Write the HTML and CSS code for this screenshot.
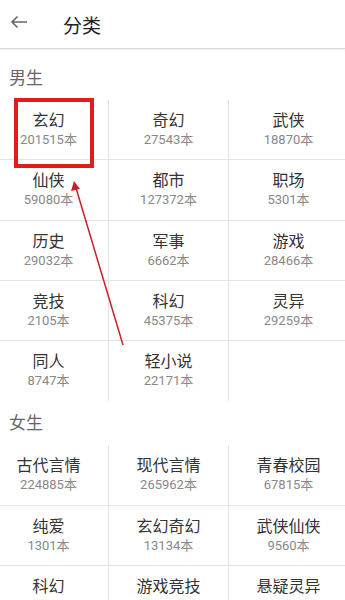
FILE: index.html
```html
<!DOCTYPE html>
<html lang="zh">
<head>
    <meta charset="UTF-8">
    <meta name="viewport" content="width=device-width, initial-scale=1.0">
    <title>分类</title>
    <link rel="stylesheet" href="styles.css">
</head>
<body>
    <div class="toolbar">
        <svg class="back" width="18" height="14" viewBox="0 0 18 14">
            <path d="M17 7H2M7.5 1.5L2 7l5.5 5.5" fill="none" stroke="#666" stroke-width="1.6"/>
        </svg>
        <span class="title">分类</span>
    </div>

    <div class="section first">男生</div>
    <div class="grid">
        <div class="cell"><div class="name">玄幻</div><div class="count">201515本</div></div>
        <div class="cell"><div class="name">奇幻</div><div class="count">27543本</div></div>
        <div class="cell"><div class="name">武侠</div><div class="count">18870本</div></div>
        <div class="cell"><div class="name">仙侠</div><div class="count">59080本</div></div>
        <div class="cell"><div class="name">都市</div><div class="count">127372本</div></div>
        <div class="cell"><div class="name">职场</div><div class="count">5301本</div></div>
        <div class="cell"><div class="name">历史</div><div class="count">29032本</div></div>
        <div class="cell"><div class="name">军事</div><div class="count">6662本</div></div>
        <div class="cell"><div class="name">游戏</div><div class="count">28466本</div></div>
        <div class="cell"><div class="name">竞技</div><div class="count">2105本</div></div>
        <div class="cell"><div class="name">科幻</div><div class="count">45375本</div></div>
        <div class="cell"><div class="name">灵异</div><div class="count">29259本</div></div>
        <div class="cell last"><div class="name">同人</div><div class="count">8747本</div></div>
        <div class="cell last"><div class="name">轻小说</div><div class="count">22171本</div></div>
        <div class="cell last"></div>
    </div>

    <div class="section">女生</div>
    <div class="grid">
        <div class="cell"><div class="name">古代言情</div><div class="count">224885本</div></div>
        <div class="cell"><div class="name">现代言情</div><div class="count">265962本</div></div>
        <div class="cell"><div class="name">青春校园</div><div class="count">67815本</div></div>
        <div class="cell"><div class="name">纯爱</div><div class="count">1301本</div></div>
        <div class="cell"><div class="name">玄幻奇幻</div><div class="count">13134本</div></div>
        <div class="cell"><div class="name">武侠仙侠</div><div class="count">9560本</div></div>
        <div class="cell"><div class="name">科幻</div></div>
        <div class="cell"><div class="name">游戏竞技</div></div>
        <div class="cell"><div class="name">悬疑灵异</div></div>
    </div>

    <!-- marca roja encima de la captura -->
    <svg class="marks" width="345" height="600" viewBox="0 0 345 600">
        <rect x="16" y="100" width="76" height="66" fill="none" stroke="#e41b1b" stroke-width="4"/>
        <line x1="123" y1="345" x2="76" y2="188" stroke="#c8202a" stroke-width="1.5"/>
        <path d="M74 181L71 191L80 189Z" fill="#c8202a"/>
    </svg>
</body>
</html>
```

FILE: styles.css
```css
body {
    margin: 0;
    background: #fff;
    font-family: Roboto, "Noto Sans CJK SC", sans-serif;
    overflow: hidden;
    position: relative;
    width: 345px;
    height: 600px;
}

.toolbar {
    height: 48px;
    display: flex;
    align-items: center;
    border-bottom: 1px solid #d8d8d8;
    box-shadow: 0 1px 2px rgba(0, 0, 0, 0.08);
}

.back {
    margin-left: 10px;
    margin-top: -4px;
}

.title {
    margin-left: 35px;
    font-size: 19px;
    color: #222;
}

.section {
    height: 24px;
    line-height: 24px;
    padding: 10px 9px;
    font-size: 17px;
    color: #666;
}

.section.first {
    margin-top: 7px;
}

.grid {
    margin-left: -11px;
    width: 360px;
    display: grid;
    grid-template-columns: repeat(3, 120px);
}

.cell {
    height: 60.25px;
    padding-top: 11px;
    box-sizing: border-box;
    text-align: center;
    border-right: 1px solid #e4e4e4;
    border-bottom: 1px solid #e4e4e4;
}

.cell.last {
    border-bottom: none;
}

.name {
    font-size: 16px;
    line-height: 20px;
    color: #333;
}

.count {
    font-size: 13px;
    line-height: 18px;
    color: #888;
}

.marks {
    position: absolute;
    top: 0;
    left: 0;
    pointer-events: none;
}
```
